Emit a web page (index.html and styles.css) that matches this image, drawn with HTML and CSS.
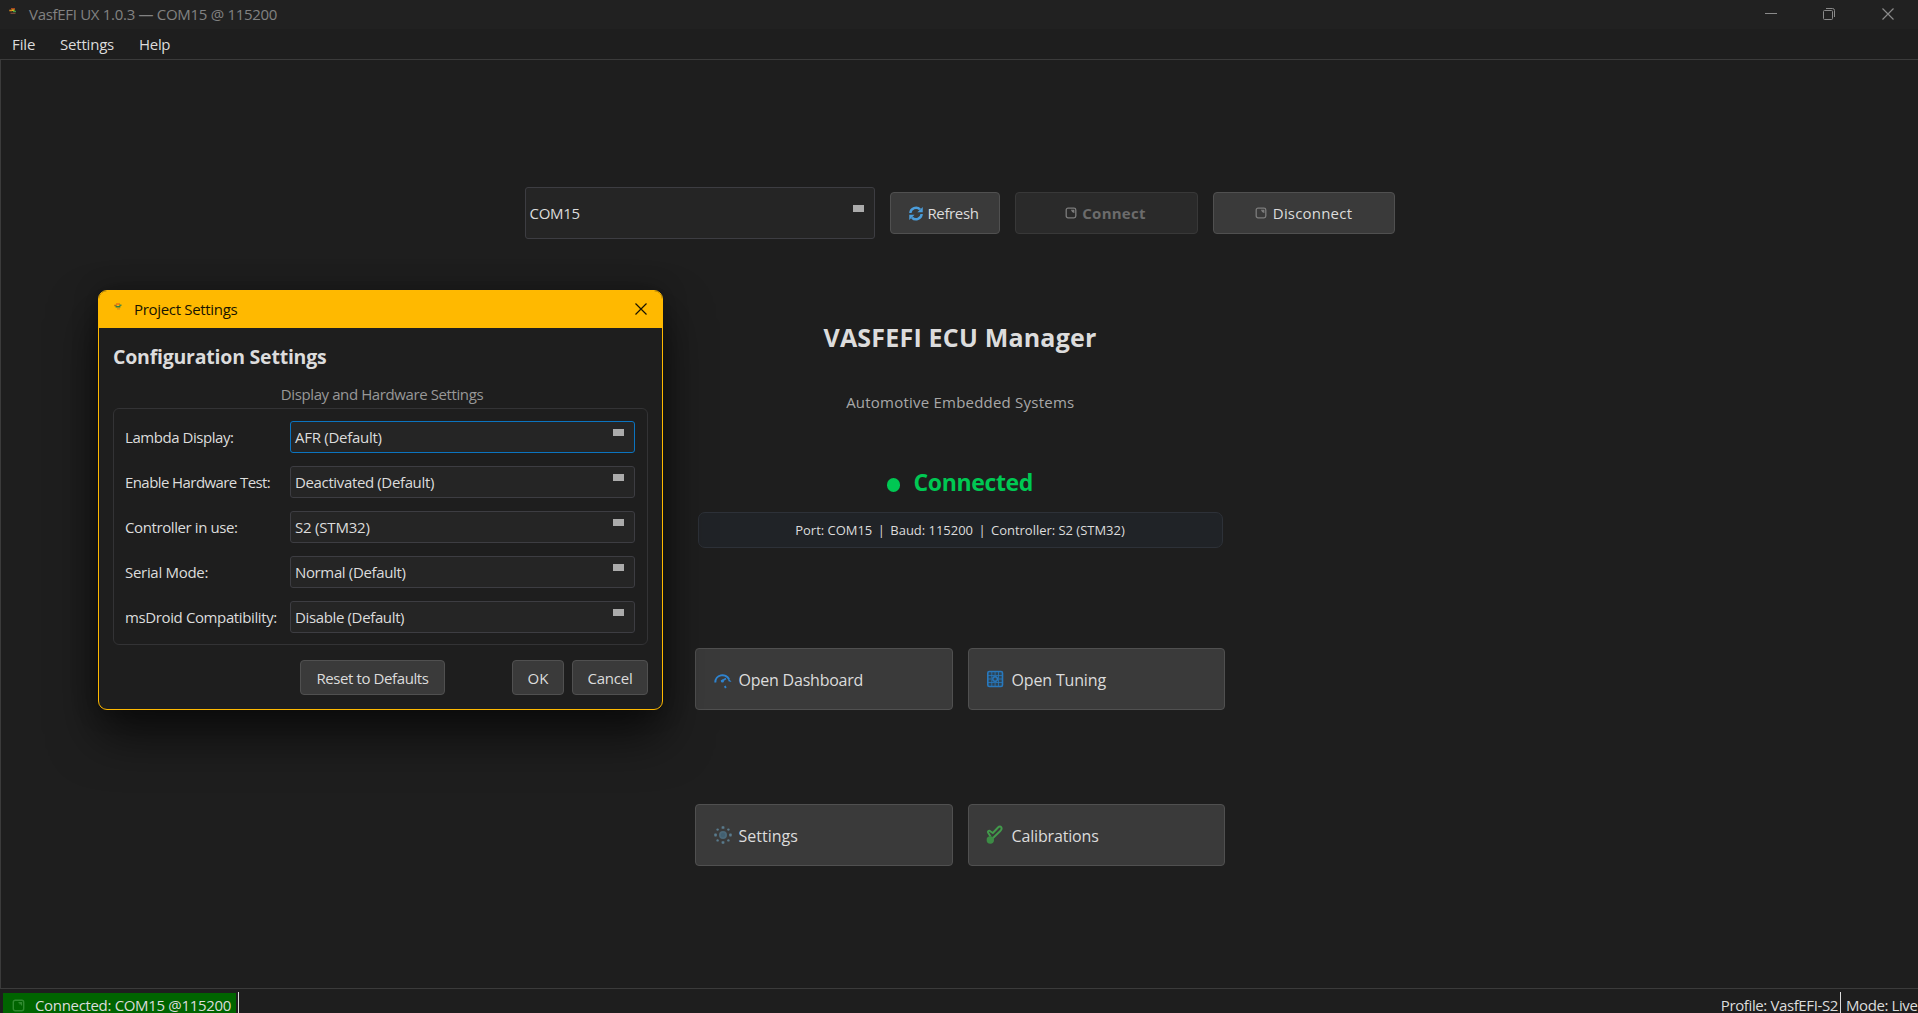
FILE: index.html
```html
<!DOCTYPE html>
<html lang="en">
<head>
<meta charset="utf-8">
<title>VasfEFI UX</title>
<link rel="stylesheet" href="styles.css">
</head>
<body>
<svg class="defs" width="0" height="0">
  <symbol id="app" viewBox="0 0 8 8"><path d="M2 .9h4" stroke="#e2531c" stroke-width="1.200"/><path d="M.3 2.500h3" stroke="#d98a1f" stroke-width="1.600"/><path d="M3 2.200h2.500" stroke="#e8d01c" stroke-width="1.400"/><path d="M4 3.500h3" stroke="#3f9a49" stroke-width="1.400"/><path d="M1.500 5.300h5" stroke="#7d4a3a" stroke-width="1.200"/></symbol>
  <symbol id="app-light" viewBox="0 0 8 8"><path d="M2 1h4" stroke="#e2531c" stroke-width="1.200"/><path d="M.3 2.500h2.400" stroke="#a3662a" stroke-width="1.600"/><path d="M5.300 2.300h2.200" stroke="#4b8a3f" stroke-width="1.600"/><path d="M1.600 3.800h4.800" stroke="#2f7d45" stroke-width="1.500"/><path d="M3 5.800h3" stroke="#dd8a1c" stroke-width="1.200"/></symbol>
  <symbol id="plug" viewBox="0 0 12 12"><rect x="1.200" y="1.200" width="9.600" height="9.600" rx="1.800" fill="none" stroke="currentColor" stroke-width="1.300"/><path d="M6 3.300h2.800v2.800M8.500 3.500L7 5" fill="none" stroke="currentColor" stroke-width="1.100"/></symbol>
  <symbol id="close" viewBox="0 0 12 12"><path d="M.5.5l11 11M11.500.5l-11 11" fill="none" stroke="currentColor" stroke-width="1.200"/></symbol>
</svg>
<div class="window">
  <header class="titlebar">
    <svg class="app-icon"><use href="#app"/></svg>
    <span class="window-title">VasfEFI UX 1.0.3 — COM15 @ 115200</span>
    <div class="controls">
      <svg width="12" height="12" viewBox="0 0 12 12"><path d="M0 5.500h12" stroke="currentColor"/></svg>
      <svg width="12" height="12" viewBox="0 0 12 12" fill="none" stroke="currentColor"><rect x=".5" y="2.500" width="9" height="9" rx="1"/><path d="M3 .5h6.500a2 2 0 0 1 2 2V9"/></svg>
      <svg width="12" height="12"><use href="#close"/></svg>
    </div>
  </header>
  <nav class="menubar"><span class="m-file">File</span><span class="m-settings">Settings</span><span class="m-help">Help</span></nav>
  <main class="content">
    <div class="connection">
      <div class="combo port"><span class="v-port">COM15</span><i class="arrow"></i></div>
      <button class="btn refresh">
        <svg width="16" height="17" viewBox="0 0 17 17" fill="none" stroke="#4b9ddb" stroke-width="2.600"><path d="M2.500 8A6 6 0 0 1 12.800 4.200"/><path d="M14.500 9A6 6 0 0 1 4.200 12.800"/><path d="M15.700 1.500v5.800H10z" fill="#4b9ddb" stroke="none"/><path d="M1.300 15.500V9.700H7z" fill="#4b9ddb" stroke="none"/></svg>
        <span>Refresh</span></button>
      <button class="btn connect" disabled><svg width="12" height="12"><use href="#plug"/></svg><span>Connect</span></button>
      <button class="btn disconnect"><svg width="12" height="12"><use href="#plug"/></svg><span>Disconnect</span></button>
    </div>
    <h1>VASFEFI ECU Manager</h1>
    <p class="subtitle">Automotive Embedded Systems</p>
    <div class="state"><i class="dot"></i><span>Connected</span></div>
    <div class="info"><span>Port: COM15</span><span class="pipe">|</span><span>Baud: 115200</span><span class="pipe">|</span><span>Controller: S2 (STM32)</span></div>
    <div class="tiles">
      <button class="tile"><svg width="18" height="18" viewBox="0 0 18 18" fill="none" stroke="#2f84d0"><path d="M1.300 11.500A7.200 7.200 0 0 1 15 8.300" stroke-width="2"/><path d="M14 6.500L17.500 11l-3-.8z" fill="#2f84d0" stroke="none"/><path d="M7 10.500l5-3" stroke-width="1.600"/><circle cx="8.500" cy="10" r="1.500" fill="#2f84d0" stroke="none"/><path d="M10.800 15l1 2" stroke-width="1.800"/></svg><span class="t-dash">Open Dashboard</span></button>
      <button class="tile raised"><svg width="18" height="18" viewBox="1 0 18 18" fill="none" stroke="#2878bd"><rect x="1.800" y="1.500" width="14.700" height="15" rx="1.500" stroke-width="1.600" fill="#2c4558"/><path d="M5.800 2v14M12.500 2v14M2 5.500h14M2 12.500h14M9.100 2v3M9.100 13v3M2 9h3M13 9h3" stroke-width=".8"/><circle cx="9.100" cy="9" r="2.300" stroke-width="1.400"/></svg><span class="t-tune">Open Tuning</span></button>
      <button class="tile raised"><svg width="18" height="18" viewBox="0 0 18 18" fill="#597b8d"><circle cx="9" cy="9" r="3.100" fill="#426071" stroke="#4b6878" stroke-width="1.800"/><g><rect x="7.600" y=".3" width="2.800" height="2.500" rx=".6"/><rect x="7.600" y="15.200" width="2.800" height="2.500" rx=".6"/><rect x=".3" y="7.600" width="2.500" height="2.800" rx=".6"/><rect x="15.200" y="7.600" width="2.500" height="2.800" rx=".6"/><circle cx="3.600" cy="3.600" r="1.200"/><circle cx="14.400" cy="3.600" r="1.200"/><circle cx="3.600" cy="14.400" r="1.200"/><circle cx="14.400" cy="14.400" r="1.200"/></g></svg><span>Settings</span></button>
      <button class="tile raised"><svg class="cal" width="18" height="20" viewBox="1 0 18 20" fill="none" stroke="#429a4b"><path d="M5.500 11.500L3.200 7.800a1.200 1.200 0 0 1 2-1.600L7.800 8 13 2.500q2-2 3.300-.2 1 1.700-1 3.700L7.500 13.500" stroke-width="1.900" stroke-linejoin="round"/><circle cx="5.300" cy="15" r="3.700" fill="#3c8b45" stroke="none"/></svg><span class="t-cal">Calibrations</span></button>
    </div>
  </main>
  <footer class="statusbar">
    <div class="conn"><svg width="13" height="13"><use href="#plug"/></svg><span>Connected: COM15 @115200</span></div>
    <div class="separator"></div>
    <div class="profile"><span>Profile: VasfEFI-S2</span></div>
    <div class="separator"></div>
    <div class="mode"><span>Mode: Live</span></div>
  </footer>
</div>

<section class="dialog">
  <header class="dialog-bar"><svg class="app-icon"><use href="#app-light"/></svg><span class="d-title">Project Settings</span><svg class="dialog-close" width="12" height="12"><use href="#close"/></svg></header>
  <div class="dialog-body">
    <h2>Configuration Settings</h2>
    <div class="legend">Display and Hardware Settings</div>
    <div class="group">
      <div class="row"><label class="l1">Lambda Display:</label><div class="combo focus"><span class="c1">AFR (Default)</span><i class="arrow"></i></div></div>
      <div class="row"><label class="l2">Enable Hardware Test:</label><div class="combo"><span>Deactivated (Default)</span><i class="arrow"></i></div></div>
      <div class="row"><label class="l3">Controller in use:</label><div class="combo"><span class="c3">S2 (STM32)</span><i class="arrow"></i></div></div>
      <div class="row"><label class="l4">Serial Mode:</label><div class="combo"><span>Normal (Default)</span><i class="arrow"></i></div></div>
      <div class="row"><label class="l5">msDroid Compatibility:</label><div class="combo"><span>Disable (Default)</span><i class="arrow"></i></div></div>
    </div>
    <div class="actions"><button class="btn reset">Reset to Defaults</button><button class="btn ok">OK</button><button class="btn cancel">Cancel</button></div>
  </div>
</section>
</body>
</html>
```
FILE: styles.css
```css
* { box-sizing: border-box; }
body { margin: 0; width: 1918px; height: 1013px; overflow: hidden; position: relative; background: #1e1e1e; color: #dcdcdc; font: 15px/20px "Open Sans", "Noto Sans", sans-serif; }
h1, h2, p { margin: 0; }
span, label { white-space: nowrap; }
.defs { position: absolute; }
.window { height: 1013px; display: flex; flex-direction: column; }
.titlebar { height: 29px; flex: none; display: flex; align-items: center; padding: 0 24px 1px 9px; background: #212121; color: #828282; }
.app-icon { width: 8px; height: 8px; flex: none; margin-top: -5px; }
.window-title { margin-left: 12px; letter-spacing: -.3px; }
.controls { margin-left: auto; display: flex; gap: 46.500px; color: #8a8a8a; }
.controls svg:nth-child(2) { margin: 0 .5px 0 -.5px; }
.menubar { height: 30px; flex: none; display: flex; padding: 5px 0 0 12px; }
.m-file { width: 48px; letter-spacing: -.1px; }
.m-settings { width: 79px; letter-spacing: -.2px; }
.m-help { letter-spacing: -.3px; }
.content { height: 930px; flex: none; border: 1px solid #3b3b3b; border-right: 0; display: flex; flex-direction: column; align-items: center; padding-top: 127px; }
.connection { display: flex; align-items: center; gap: 15px; height: 52px; }
.combo { display: flex; justify-content: space-between; height: 32px; border: 1px solid #3d3d42; border-radius: 3px; background: #252525; align-items: center; padding: 0 10px 0 4px; }
.combo.focus { border-color: #0b74c0; }
.arrow { width: 11px; height: 7px; background: #ababab; align-self: flex-start; margin-top: 7px; }
.combo.port { width: 350px; height: 52px; }
.port .arrow { margin-top: 17px; }
.v-port { letter-spacing: -.3px; }
.btn { height: 42px; border: 1px solid #505050; border-radius: 4px; background: #3a3a3a; color: #dcdcdc; font: inherit; padding: 0; display: flex; align-items: center; justify-content: center; }
.btn svg { flex: none; color: #7c7c7c; }
.refresh { width: 110px; gap: 3px; letter-spacing: -.35px; padding-right: 2px; }
.connect { width: 183px; gap: 5px; background: #2a2a2a; border-color: #383838; color: #6c6c6c; font-weight: 700; letter-spacing: .25px; padding-right: 1px; }
.disconnect { width: 182px; gap: 6px; letter-spacing: .2px; }
h1 { margin-top: 78px; height: 40px; font: 700 25px/40px "Open Sans", sans-serif; letter-spacing: .2px; padding-left: 1px; }
.subtitle { margin-top: 34px; height: 22px; line-height: 22px; color: #a8a8a8; letter-spacing: .22px; padding-left: 1.500px; }
.state { margin-top: 52px; height: 34px; display: flex; align-items: center; gap: 13px; padding-left: 1px; color: #00c853; font: 700 23px/34px "Open Sans", sans-serif; letter-spacing: -.35px; }
.dot { width: 13.500px; height: 13.500px; border-radius: 50%; background: #00c853; margin-top: 6px; }
.info { margin: 13px 0 0 1px; width: 525px; height: 36px; border: 1px solid #2d3138; border-radius: 7px; background: #202327; display: flex; align-items: center; justify-content: center; font-size: 13px; letter-spacing: -.02px; }
.pipe { width: 18px; text-align: center; }
.tiles { margin-top: 100px; display: grid; grid-template-columns: 258px 257px; gap: 94px 15px; }
.tile { height: 62px; border: 1px solid #505050; border-radius: 4px; background: #3a3a3a; color: #dcdcdc; font: 16px/22px "Open Sans", sans-serif; padding: 1px 0 0 18px; display: flex; align-items: center; gap: 7px; }
.raised svg { margin-bottom: 2px; }
.raised .cal { margin: 0 1px 2px -1px; }
.t-dash { letter-spacing: -.22px; }
.t-tune, .t-cal { letter-spacing: -.16px; }
.statusbar { flex: none; height: 24px; display: flex; padding: 3px 0 0 3px; }
.separator { width: 1px; background: #dcdcdc; }
.conn { width: 233px; margin: 1px 2px 0 0; background: #006400; padding: 2px 0 0 9px; display: flex; gap: 10px; letter-spacing: -.33px; }
.conn svg { color: #2f8a2f; margin-top: 4px; flex: none; }
.profile { margin-left: auto; padding: 3px 2px 0 0; letter-spacing: -.38px; }
.mode { width: 77px; padding: 3px 0 0 5px; letter-spacing: -.4px; }
.dialog { position: absolute; left: 98px; top: 290px; width: 565px; height: 420px; border: 1px solid #ffb900; border-radius: 9px; background: #1e1e1e; overflow: hidden; box-shadow: 0 26px 48px rgba(0,0,0,.6), 0 0 24px rgba(0,0,0,.3); }
.dialog-bar { height: 37px; background: #ffb900; color: #181400; display: flex; align-items: center; padding: 0 15px 2px 15px; }
.dialog-bar .app-icon { margin-top: -4px; }
.d-title { margin-left: 12px; letter-spacing: -.32px; }
.dialog-close { margin-left: auto; }
.dialog-body { padding: 16px 14px 0; }
h2 { height: 26px; font: 700 19.500px/25px "Open Sans", sans-serif; letter-spacing: -.22px; }
.legend { margin-top: 14px; height: 22px; text-align: center; color: #989898; padding-left: 3px; letter-spacing: -.4px; }
.group { margin-top: 2px; height: 237px; border: 1px solid #333335; border-radius: 6px; padding: 12px 12px 0 11px; display: flex; flex-direction: column; gap: 13px; }
.row { display: grid; grid-template-columns: 165px 345px; align-items: center; letter-spacing: -.36px; }
.l1 { letter-spacing: -.45px; }
.l2 { letter-spacing: -.58px; }
.l3 { letter-spacing: -.4px; }
.l4 { letter-spacing: -.3px; }
.l5 { letter-spacing: -.38px; }
.c1 { letter-spacing: -.27px; }
.c3 { letter-spacing: -.2px; }
.actions { display: flex; margin-top: 15px; justify-content: flex-end; }
.actions .btn { height: 35px; }
.reset { width: 145px; margin-right: 67px; letter-spacing: -.4px; }
.ok { width: 52px; margin-right: 8px; }
.cancel { width: 76px; letter-spacing: -.25px; }
```
